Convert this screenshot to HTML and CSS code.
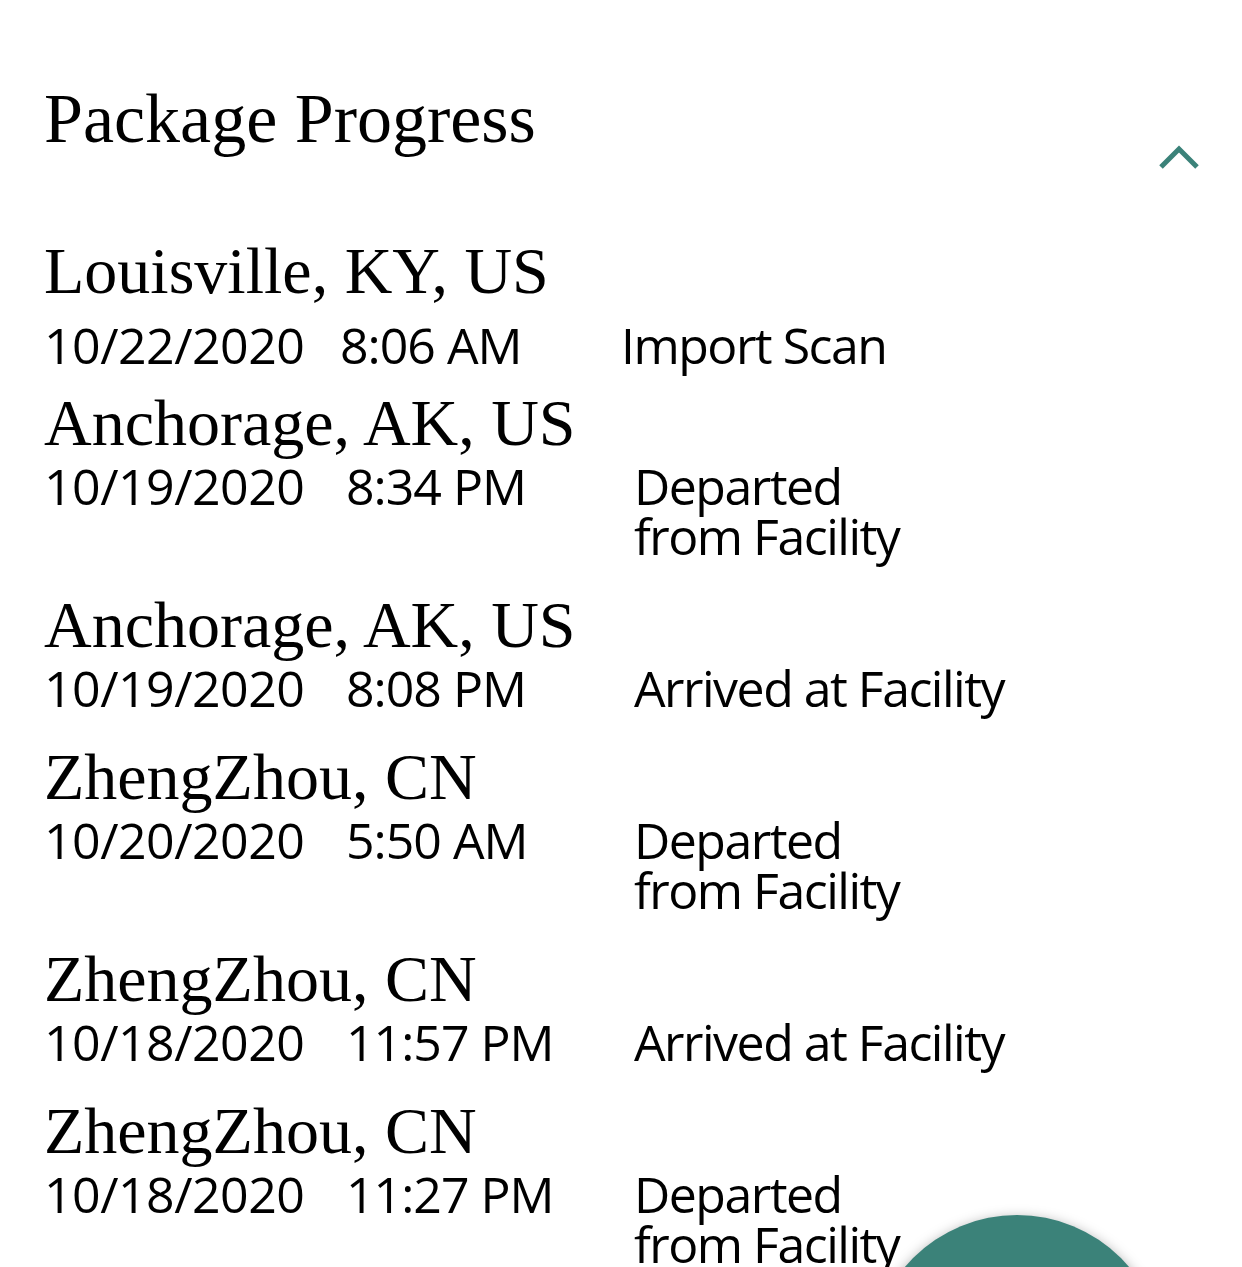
FILE: index.html
```html
<!DOCTYPE html>
<html lang="en">
<head>
    <meta charset="UTF-8">
    <title>Package Progress</title>
    <link rel="stylesheet" href="styles.css">
</head>
<body>
    <div class="page">
        <div class="header">
            <h1>Package Progress</h1>
            <svg class="chevron" width="48" height="30" viewBox="0 0 48 30">
                <polyline points="6,24 24,6 42,24" fill="none" stroke="#3b8279" stroke-width="5"/>
            </svg>
        </div>

        <div class="entries">
            <div class="entry entry--latest">
                <h2 class="city">Louisville, KY, US</h2>
                <div class="row">
                    <span class="date">10/22/2020</span>
                    <span class="time">8:06 AM</span>
                    <span class="status">Import Scan</span>
                </div>
            </div>

            <div class="entry">
                <h2 class="city">Anchorage, AK, US</h2>
                <div class="row">
                    <span class="date">10/19/2020</span>
                    <span class="time">8:34 PM</span>
                    <span class="status">Departed<br>from Facility</span>
                </div>
            </div>

            <div class="entry">
                <h2 class="city">Anchorage, AK, US</h2>
                <div class="row">
                    <span class="date">10/19/2020</span>
                    <span class="time">8:08 PM</span>
                    <span class="status">Arrived at Facility</span>
                </div>
            </div>

            <div class="entry">
                <h2 class="city">ZhengZhou, CN</h2>
                <div class="row">
                    <span class="date">10/20/2020</span>
                    <span class="time">5:50 AM</span>
                    <span class="status">Departed<br>from Facility</span>
                </div>
            </div>

            <div class="entry">
                <h2 class="city">ZhengZhou, CN</h2>
                <div class="row">
                    <span class="date">10/18/2020</span>
                    <span class="time">11:57 PM</span>
                    <span class="status">Arrived at Facility</span>
                </div>
            </div>

            <div class="entry">
                <h2 class="city">ZhengZhou, CN</h2>
                <div class="row">
                    <span class="date">10/18/2020</span>
                    <span class="time">11:27 PM</span>
                    <span class="status">Departed<br>from Facility</span>
                </div>
            </div>
        </div>
    </div>

    <!-- boton flotante, cortado por el borde inferior -->
    <div class="fab"></div>
</body>
</html>
```

FILE: styles.css
```css
html, body { margin: 0; overflow: hidden; background: #fff; color: #000; }
.page { padding: 79px 39px 0 44px; }

.header { display: flex; justify-content: space-between; align-items: flex-start; }
.header h1 {
    margin: 0;
    font-family: "Liberation Serif", serif;
    font-weight: normal;
    font-size: 70px;
    line-height: 80px;
}
.chevron { margin-top: 64px; }

.entries { margin-top: 60px; }
.entry { padding-bottom: 26px; }

.city {
    margin: 0;
    font-family: "Liberation Serif", serif;
    font-weight: normal;
    font-size: 66px;
    line-height: 76px;
}

.row {
    display: grid;
    grid-template-columns: 302px 288px 1fr;
    font-family: "Open Sans", sans-serif;
    font-size: 50px;
    line-height: 50px;
}
.date { letter-spacing: -0.5px; }
.time { letter-spacing: -1px; }
.status { letter-spacing: -1.5px; }

/* primer registro: un poco mas separado */
.entry--latest { padding-bottom: 15px; }
.entry--latest .city { margin-bottom: 11px; }
.entry--latest .row { grid-template-columns: 296px 281px 1fr; }

.fab {
    position: fixed;
    left: 870px;
    bottom: -242px;
    width: 294px;
    height: 294px;
    border-radius: 50%;
    background-color: #3b8279;
    box-shadow: 0 4px 14px rgba(0, 0, 0, 0.4);
}
```
